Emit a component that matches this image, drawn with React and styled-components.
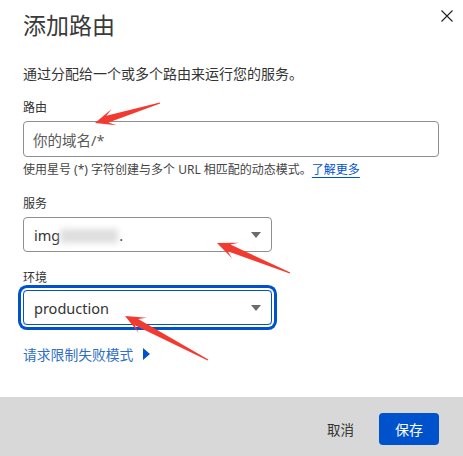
import React from 'react';
import styled, { createGlobalStyle } from 'styled-components';

const GlobalStyle = createGlobalStyle`
  html, body {
    margin: 0;
    padding: 0;
    background: #fff;
  }
  body {
    font-family: "Noto Sans", "Noto Sans CJK SC", sans-serif;
    color: #333;
  }
`;

const BLUE = '#0052cc';
const RED = '#f23a30';

// red annotation arrows drawn over the form: [tail, tip]
const arrows = [
  [[160, 103], [95, 123]],
  [[290, 273], [217, 243]],
  [[208, 360], [125, 316]],
];

const arrowPoints = ([tx, ty], [px, py]) => {
  const len = Math.hypot(px - tx, py - ty);
  const dx = (px - tx) / len;
  const dy = (py - ty) / len;
  const nx = -dy;
  const ny = dx;
  const at = (back, side) => [px - dx * back + nx * side, py - dy * back + ny * side];
  const pts = [
    at(len, 0.6),
    at(13, 3.6),
    at(20, 8.5),
    [px, py],
    at(20, -8.5),
    at(13, -3.6),
    at(len, -0.6),
  ];
  return pts.map((p) => p.join(',')).join(' ');
};

const App = () => (
  <>
    <GlobalStyle />
    <Modal>
      <Header>
        <Title>添加路由</Title>
        <CloseButton aria-label="close">
          <svg width="12" height="12" viewBox="0 0 12 12">
            <path d="M0.5 0.5 L11.5 11.5 M11.5 0.5 L0.5 11.5" stroke="#222" strokeWidth="1.1" />
          </svg>
        </CloseButton>
      </Header>

      <Body>
        <Description>通过分配给一个或多个路由来运行您的服务。</Description>

        <Label $top={15}>路由</Label>
        <TextInput>你的域名/*</TextInput>
        <Helper>
          使用星号 (*) 字符创建与多个 URL 相匹配的动态模式。<HelpLink>了解更多</HelpLink>
        </Helper>

        <Label $top={15}>服务</Label>
        <Select>
          <SelectValue>
            img<Blurred />.
          </SelectValue>
          <Caret />
        </Select>

        <Label $top={16}>环境</Label>
        <Select $focused>
          <SelectValue>production</SelectValue>
          <Caret />
        </Select>

        <Expander>
          请求限制失败模式
          <svg width="7" height="12" viewBox="0 0 7 12">
            <path d="M0 0 L7 6 L0 12 Z" fill={BLUE} />
          </svg>
        </Expander>
      </Body>

      <Footer>
        <CancelButton>取消</CancelButton>
        <SaveButton>保存</SaveButton>
      </Footer>

      <Annotations width="463" height="456" viewBox="0 0 463 456">
        {arrows.map(([tail, tip], i) => (
          <polygon key={i} points={arrowPoints(tail, tip)} fill={RED} />
        ))}
      </Annotations>
    </Modal>
  </>
);

const Modal = styled.div`
  position: relative;
  width: 463px;
  height: 456px;
  display: flex;
  flex-direction: column;
  background: #fff;
  overflow: hidden;
`;

const Header = styled.header`
  display: flex;
  justify-content: space-between;
  align-items: flex-start;
  padding: 8px 10px 0 23px;
`;

const Title = styled.h1`
  margin: 0;
  font-family: "Noto Sans CJK SC", sans-serif;
  font-size: 23px;
  line-height: 32px;
  font-weight: 400;
  color: #3a3a3a;
`;

const CloseButton = styled.button`
  border: 0;
  background: none;
  padding: 0;
  margin-top: 2px;
  display: flex;
  cursor: pointer;
`;

const Body = styled.main`
  flex: 1;
  display: flex;
  flex-direction: column;
  align-items: flex-start;
  padding: 0 24px 0 23px;
`;

const Description = styled.p`
  margin: 23px 0 0;
  font-family: "Noto Sans CJK SC", sans-serif;
  font-size: 14px;
  line-height: 20px;
  color: #333;
`;

const Label = styled.label`
  margin-top: ${(p) => p.$top}px;
  font-family: "Noto Sans CJK SC", sans-serif;
  font-size: 12px;
  line-height: 18px;
  color: #333;
`;

const TextInput = styled.div`
  box-sizing: border-box;
  margin-top: 5px;
  width: 416px;
  height: 36px;
  display: flex;
  align-items: center;
  padding: 0 9px;
  border: 1px solid #8f8f8f;
  border-radius: 4px;
  font-family: "Noto Sans", "Noto Sans CJK SC", sans-serif;
  font-size: 14.5px;
  color: #5a5a5a;
`;

const Helper = styled.p`
  margin: 4px 0 0;
  font-family: "Noto Sans", "Noto Sans CJK SC", sans-serif;
  font-size: 12px;
  line-height: 18px;
  color: #444;
`;

const HelpLink = styled.a`
  color: ${BLUE};
  text-decoration: underline;
  text-underline-offset: 3px;
  cursor: pointer;
`;

const Select = styled.div`
  box-sizing: border-box;
  margin-top: ${(p) => (p.$focused ? 4 : 5)}px;
  width: 249px;
  height: 35px;
  display: flex;
  align-items: center;
  justify-content: space-between;
  padding: 0 10px 0 10px;
  border: 1px solid ${(p) => (p.$focused ? BLUE : '#8f8f8f')};
  border-radius: 4px;
  box-shadow: ${(p) => (p.$focused ? `0 0 0 2px #fff, 0 0 0 5px ${BLUE}` : 'none')};
`;

const SelectValue = styled.span`
  display: flex;
  align-items: center;
  font-family: "Noto Sans", sans-serif;
  font-size: 14.5px;
  color: #333;
`;

const Blurred = styled.span`
  display: inline-block;
  width: 58px;
  height: 14px;
  margin: 2px 1px 0 0;
  background: #dedede;
  filter: blur(3px);
`;

const Caret = styled.span`
  width: 0;
  height: 0;
  border-left: 5px solid transparent;
  border-right: 5px solid transparent;
  border-top: 6px solid #6b6b6b;
`;

const Expander = styled.div`
  margin-top: 19px;
  display: flex;
  align-items: center;
  gap: 10px;
  font-family: "Noto Sans CJK SC", sans-serif;
  font-size: 13.8px;
  line-height: 20px;
  color: #2f6fc4;
  cursor: pointer;
`;

const Footer = styled.footer`
  height: 59px;
  box-sizing: border-box;
  display: flex;
  justify-content: flex-end;
  align-items: flex-start;
  gap: 13px;
  padding: 16px 24px 0 0;
  background: #d8d8d8;
`;

const CancelButton = styled.button`
  height: 32px;
  padding: 0 12px;
  border: 0;
  background: none;
  font-family: "Noto Sans CJK SC", sans-serif;
  font-size: 13.5px;
  color: #333;
  cursor: pointer;
`;

const SaveButton = styled.button`
  width: 60px;
  height: 32px;
  border: 0;
  border-radius: 4px;
  background: ${BLUE};
  font-family: "Noto Sans CJK SC", sans-serif;
  font-size: 14px;
  color: #fff;
  cursor: pointer;
`;

const Annotations = styled.svg`
  position: absolute;
  left: 0;
  top: 0;
  pointer-events: none;
`;

export default App;
